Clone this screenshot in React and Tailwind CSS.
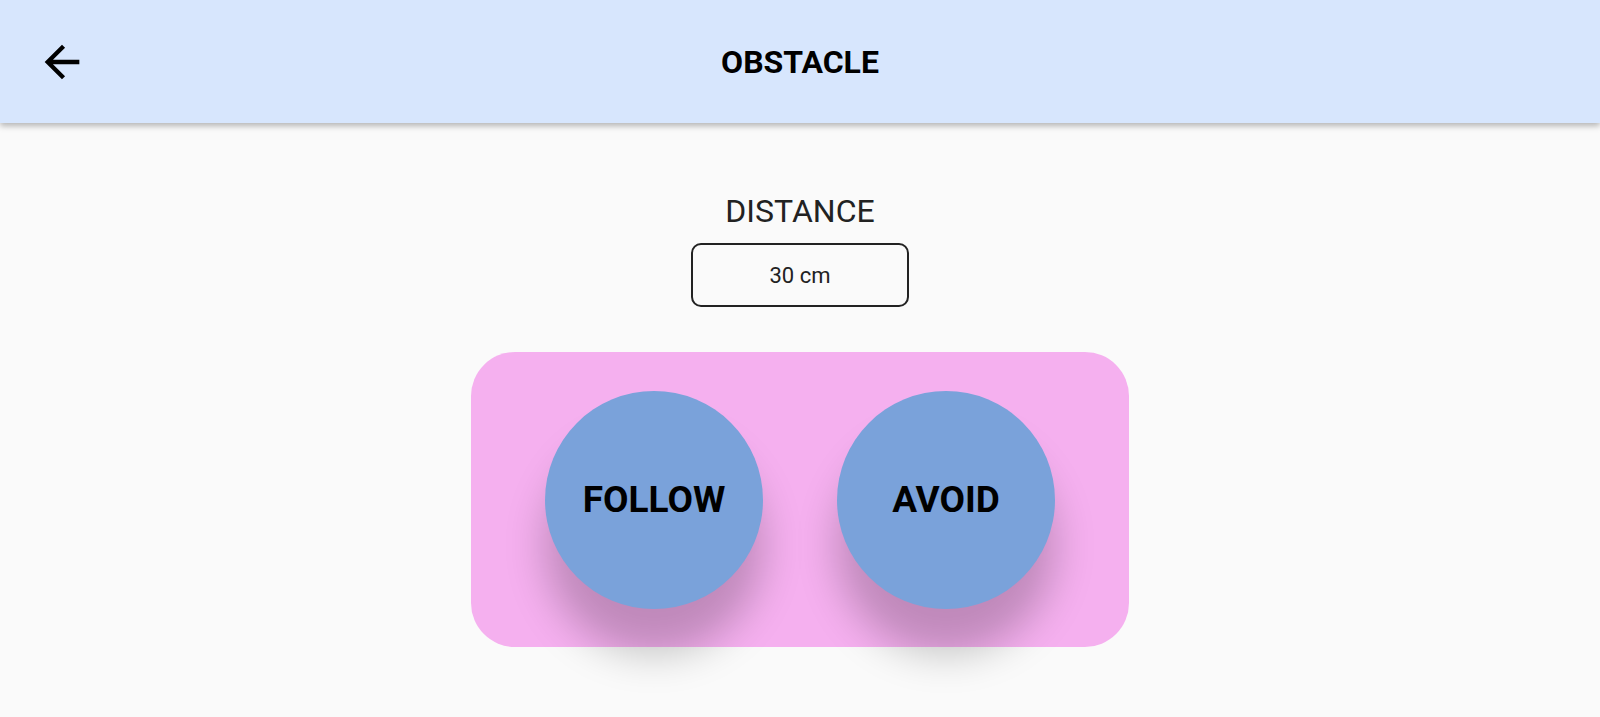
import React from "react";

export default function App() {
  return (
    <div className="min-h-[717px] w-full bg-[#fafafa] font-['Roboto',sans-serif]">
      <header className="relative z-10 flex h-[123px] items-center bg-[#d7e6fd] shadow-[0_3px_6px_rgba(0,0,0,0.28)]">
        <button className="ml-[36px] flex h-[52px] w-[52px] items-center justify-center text-black">
          <svg viewBox="0 0 24 24" width="52" height="52" fill="currentColor">
            <path d="M20 11H7.83l5.59-5.59L12 4l-8 8 8 8 1.41-1.41L7.83 13H20v-2z" />
          </svg>
        </button>
        <h1 className="absolute left-1/2 top-1/2 -translate-x-1/2 -translate-y-1/2 text-[32px] font-bold leading-none text-black">
          OBSTACLE
        </h1>
      </header>
      <main className="flex flex-col items-center pt-[69px]">
        <div className="text-[32px] leading-[38px] text-[#222]">DISTANCE</div>
        <div className="mt-[13px] flex h-[64px] w-[218px] items-center justify-center rounded-[10px] border-2 border-[#222] text-[22px] text-[#222]">
          30 cm
        </div>
        <div className="mt-[45px] flex h-[295px] w-[658px] items-center justify-evenly rounded-[44px] bg-[#f5b0ef]">
          <button className="flex h-[218px] w-[218px] items-center justify-center rounded-full bg-[#7aa2da] text-[37px] font-bold text-black shadow-[0_45px_40px_rgba(0,0,0,0.22)]">
            FOLLOW
          </button>
          <button className="flex h-[218px] w-[218px] items-center justify-center rounded-full bg-[#7aa2da] text-[37px] font-bold text-black shadow-[0_45px_40px_rgba(0,0,0,0.22)]">
            AVOID
          </button>
        </div>
      </main>
    </div>
  );
}
